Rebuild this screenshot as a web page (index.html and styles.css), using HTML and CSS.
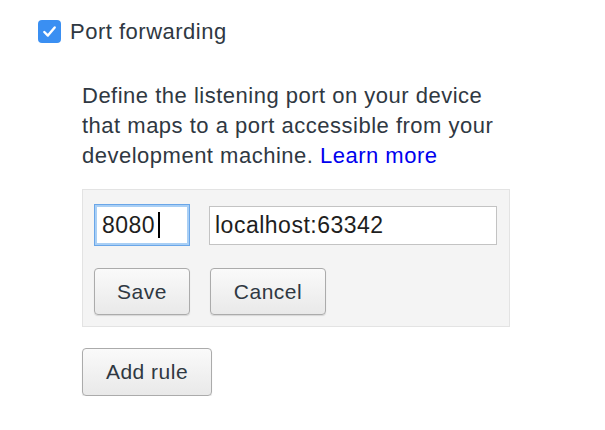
FILE: index.html
```html
<!DOCTYPE html>
<html lang="en">
<head>
<meta charset="utf-8">
<title>Port forwarding</title>
<link rel="stylesheet" href="styles.css">
</head>
<body>
<div class="page">
  <label class="check-row">
    <span class="checkbox">
      <svg width="23" height="23" viewBox="0 0 23 23"><path d="M6.3 12 L9.9 15.6 L16.7 7.4" fill="none" stroke="#fff" stroke-width="2.4" stroke-linecap="round" stroke-linejoin="round"/></svg>
    </span>
    <span class="check-label">Port forwarding</span>
  </label>
  <div class="section">
    <p class="desc">Define the listening port on your device that maps to a port accessible from your development machine. <a class="link" href="#">Learn more</a></p>
    <div class="rule-box">
      <div class="field-row">
        <div class="field port focused"><span class="value typing">8080</span></div>
        <div class="field address"><span class="value">localhost:63342</span></div>
      </div>
      <div class="button-row">
        <button class="btn save">Save</button>
        <button class="btn cancel">Cancel</button>
      </div>
    </div>
    <button class="btn add">Add rule</button>
  </div>
</div>
</body>
</html>
```
FILE: styles.css
```css
html, body {
  margin: 0;
  padding: 0;
  background: #ffffff;
}
body {
  font-family: "Liberation Sans", Arial, sans-serif;
  color: #2f3842;
}
.page {
  padding: 19px 0 0 38px;
}
.check-row {
  display: flex;
  align-items: center;
  gap: 9px;
  height: 25px;
}
.checkbox {
  width: 23px;
  height: 23px;
  border-radius: 4px;
  background: #3a8ff2;
  display: flex;
}
.check-label {
  font-size: 22px;
  letter-spacing: 0.5px;
  line-height: 25px;
}
.section {
  margin-left: 44px;
  margin-top: 37px;
}
.desc {
  margin: 0;
  width: 428px;
  font-size: 22px;
  letter-spacing: 0.5px;
  line-height: 30px;
}
.link {
  color: #0000ee;
  text-decoration: none;
}
.rule-box {
  margin-top: 18px;
  width: 428px;
  box-sizing: border-box;
  background: #f4f4f4;
  border: 1px solid #e3e3e3;
  padding: 14px 11px 11px 11px;
}
.field-row {
  display: flex;
  align-items: center;
  gap: 19px;
  height: 42px;
}
.field {
  box-sizing: border-box;
  background: #ffffff;
  display: flex;
  align-items: center;
  justify-content: flex-start;
  font-size: 23px;
  letter-spacing: 0.5px;
  color: #1e1e1e;
}
.value {
  display: inline-block;
  line-height: 26px;
}
.typing {
  border-right: 2px solid #000000;
  padding-right: 3px;
}
.port {
  width: 96px;
  height: 42px;
  border: 1px solid #6aa6e8;
  box-shadow: inset 0 0 0 2px #a9cff5;
  padding-left: 7px;
}
.address {
  width: 288px;
  height: 39px;
  border: 1px solid #c3c3c3;
  padding-left: 5px;
}
.button-row {
  display: flex;
  gap: 20px;
  margin-top: 22px;
}
.btn {
  font-family: "Liberation Sans", Arial, sans-serif;
  font-size: 21px;
  letter-spacing: 0.5px;
  color: #2f3842;
  height: 47px;
  border: 1px solid #ababab;
  border-radius: 4px;
  background: linear-gradient(#fafafa, #e9e9e9);
  box-shadow: 0 1px 1px rgba(0, 0, 0, 0.12);
  padding: 0;
}
.save {
  width: 96px;
}
.cancel {
  width: 116px;
}
.add {
  width: 130px;
  height: 48px;
  margin-top: 21px;
}
```
